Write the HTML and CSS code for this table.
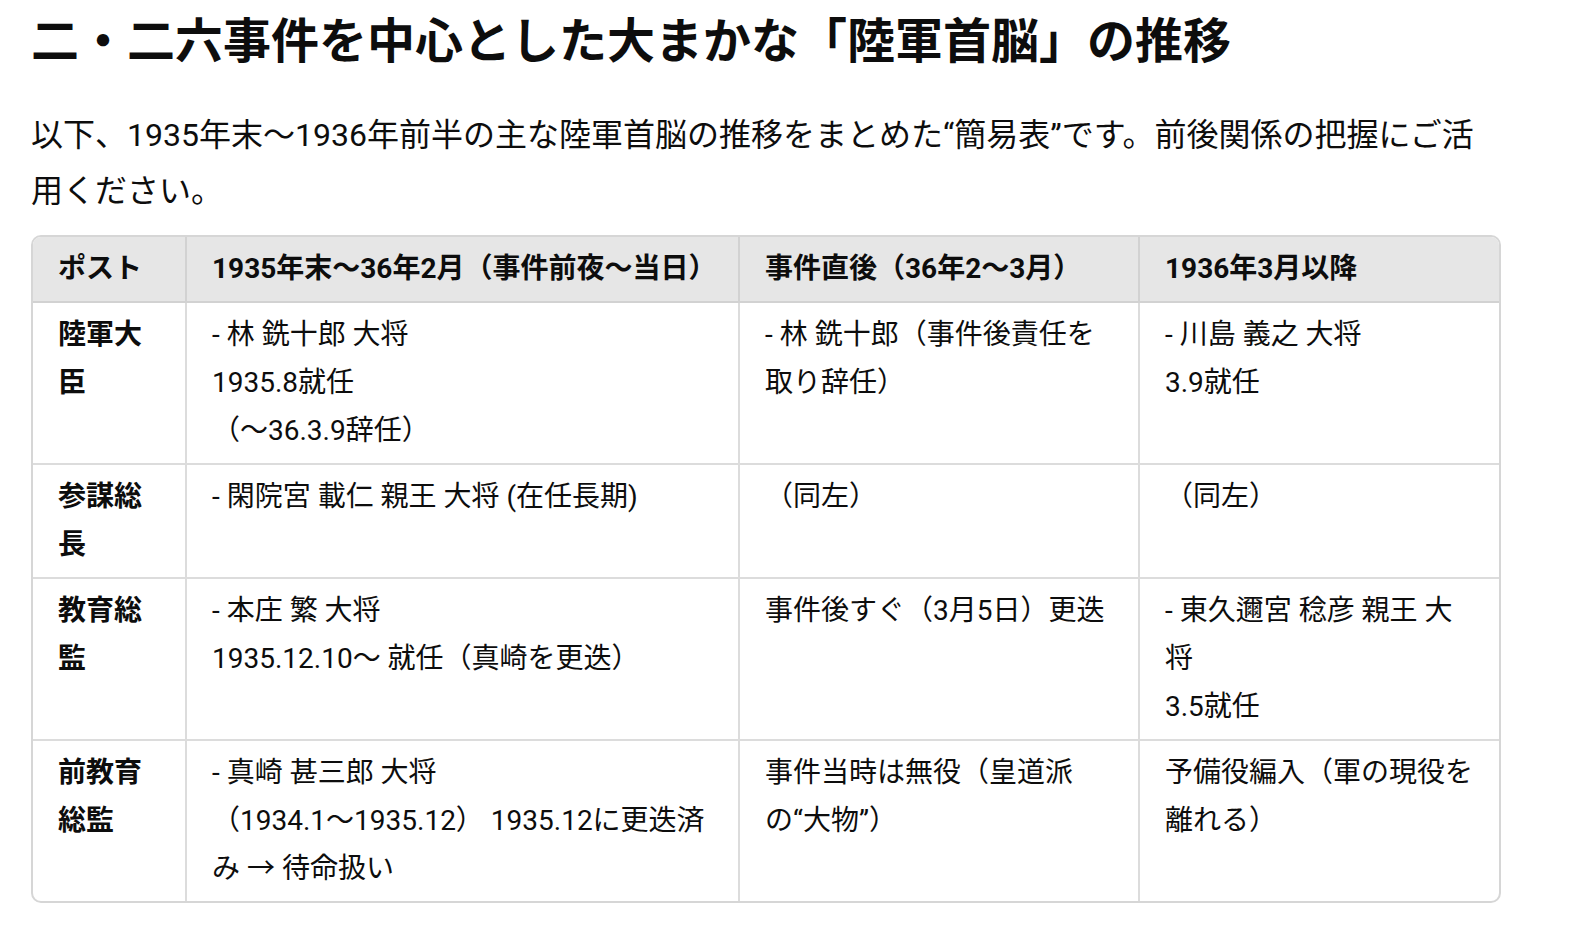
FILE: index.html
```html
<!DOCTYPE html>
<html lang="ja">
<head>
<meta charset="utf-8">
<title>二・二六事件</title>
<link rel="stylesheet" href="styles.css">
</head>
<body>
<main class="page">
  <h2 class="title">二・二六事件を中心とした大まかな「陸軍首脳」の推移</h2>
  <p class="lead">以下、1935年末〜1936年前半の主な陸軍首脳の推移をまとめた“簡易表”です。前後関係の把握にご活用ください。</p>
  <div class="table-wrap">
    <table class="tbl">
      <colgroup>
        <col class="c1"><col class="c2"><col class="c3"><col class="c4">
      </colgroup>
      <thead>
        <tr>
          <th>ポスト</th>
          <th>1935年末〜36年2月（事件前夜〜当日）</th>
          <th>事件直後（36年2〜3月）</th>
          <th>1936年3月以降</th>
        </tr>
      </thead>
      <tbody>
        <tr>
          <td class="post">陸軍大臣</td>
          <td>- 林 銑十郎 大将<br>1935.8就任<br>（〜36.3.9辞任）</td>
          <td>- 林 銑十郎（事件後責任を取り辞任）</td>
          <td>- 川島 義之 大将<br>3.9就任</td>
        </tr>
        <tr>
          <td class="post">参謀総長</td>
          <td>- 閑院宮 載仁 親王 大将 (在任長期)</td>
          <td>（同左）</td>
          <td>（同左）</td>
        </tr>
        <tr>
          <td class="post">教育総監</td>
          <td>- 本庄 繁 大将<br>1935.12.10〜 就任（真崎を更迭）</td>
          <td>事件後すぐ（3月5日）更迭</td>
          <td>- 東久邇宮 稔彦 親王 大将<br>3.5就任</td>
        </tr>
        <tr>
          <td class="post">前教育総監</td>
          <td>- 真崎 甚三郎 大将<br>（1934.1〜1935.12） 1935.12に更迭済み → 待命扱い</td>
          <td>事件当時は無役（皇道派の“大物”）</td>
          <td>予備役編入（軍の現役を離れる）</td>
        </tr>
      </tbody>
    </table>
  </div>
</main>
</body>
</html>
```

FILE: styles.css
```css
html, body {
  margin: 0;
  padding: 0;
  background: #ffffff;
}

body {
  font-family: Roboto, "Noto Sans CJK JP", sans-serif;
  color: #0d0d0d;
}

.page {
  width: 1470px;
  padding: 10px 30px 30px 31px;
}

.title {
  margin: 0 0 33px 0;
  font-size: 48px;
  line-height: 64px;
  font-weight: 700;
}

.lead {
  margin: 0 0 16px 0;
  font-size: 32px;
  line-height: 56px;
}

.table-wrap {
  border: 2px solid #d6d6d6;
  border-radius: 10px;
  overflow: hidden;
}

.tbl {
  width: 100%;
  table-layout: fixed;
  border-collapse: separate;
  border-spacing: 0;
  font-size: 28px;
  line-height: 48px;
}

.c1 { width: 154px; }
.c2 { width: 553px; }
.c3 { width: 400px; }
.c4 { width: auto; }

.tbl th,
.tbl td {
  text-align: left;
  vertical-align: top;
  padding: 8px 22px 8px 25px;
  border-right: 2px solid #dcdcdc;
  border-bottom: 2px solid #dcdcdc;
}

.tbl th:last-child,
.tbl td:last-child {
  border-right: none;
}

.tbl tbody tr:last-child td {
  border-bottom: none;
}

.tbl th {
  background: #e6e6e6;
  font-weight: 700;
  border-right-color: #d2d2d2;
  border-bottom-color: #d2d2d2;
}

.tbl td.post {
  font-weight: 700;
}
```
